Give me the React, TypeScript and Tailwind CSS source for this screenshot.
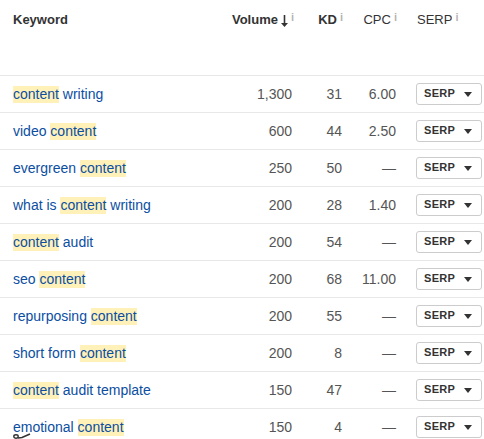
const rows: [string, string, string, string, string][] = [
  ["", " writing", "1,300", "31", "6.00"],
  ["video ", "", "600", "44", "2.50"],
  ["evergreen ", "", "250", "50", "—"],
  ["what is ", " writing", "200", "28", "1.40"],
  ["", " audit", "200", "54", "—"],
  ["seo ", "", "200", "68", "11.00"],
  ["repurposing ", "", "200", "55", "—"],
  ["short form ", "", "200", "8", "—"],
  ["", " audit template", "150", "47", "—"],
  ["emotional ", "", "150", "4", "—"],
];

function Info() {
  return <span className="text-[11px] font-bold text-[#b5b5b5] ml-[3px] relative -top-[3px]">i</span>;
}

export default function App() {
  return (
    <div className="w-[484px] h-[439px] overflow-hidden bg-white relative font-['Liberation_Sans',Arial,sans-serif] text-[14px]">
      <div className="h-[75px] flex items-start pt-[12px] text-[13px] font-bold text-[#333] leading-[16px]">
        <div className="w-[300px] flex pl-[13px] pr-[6px] justify-between">
          <span>Keyword</span>
          <span className="flex items-start">
            Volume
            <svg width="7" height="12" viewBox="0 0 7 12" className="ml-[3px] mt-[3px]">
              <path d="M2.700 0h1.600v8H7L3.500 12 0 8h2.700z" fill="#333" />
            </svg>
            <Info />
          </span>
        </div>
        <div className="w-[43px] text-right">KD<Info /></div>
        <div className="w-[54px] text-right font-normal">CPC<Info /></div>
        <div className="pl-[20px]"><span className="font-normal">SERP</span><Info /></div>
      </div>
      {rows.map((r, i) => (
        <div key={i} className="h-[37px] flex items-center border-t border-[#e8e8e8] text-[#555]">
          <div className="w-[300px] flex justify-between pl-[13px] pr-[8px]">
            <span className="text-[#0b4ea2] whitespace-pre">
              {r[0]}
              <span className="bg-[#fff1b8] pb-[1px]">content</span>
              {r[1]}
            </span>
            <span>{r[2]}</span>
          </div>
          <div className="w-[42px] text-right">{r[3]}</div>
          <div className="w-[54px] text-right">{r[4]}</div>
          <div className="ml-[20px] w-[66px] h-[22px] border border-[#ccc] rounded-[3px] flex items-center justify-between pl-[7px] pr-[9px] text-[11px] font-bold text-[#333] tracking-[0.3px]">
            <span className="relative -top-[1px]">SERP</span>
            <svg width="8" height="5" viewBox="0 0 8 5"><path d="M0 0h8L4 5z" fill="#333" /></svg>
          </div>
        </div>
      ))}
      <svg width="18" height="6" viewBox="0 0 18 6" className="absolute left-[13px] top-[433px]">
        <ellipse cx="3" cy="3.500" rx="2.200" ry="1.700" fill="none" stroke="#333" strokeWidth="1.400" />
        <path d="M5 5l4-.5 8-3.500" fill="none" stroke="#333" strokeWidth="1.600" />
      </svg>
    </div>
  );
}
